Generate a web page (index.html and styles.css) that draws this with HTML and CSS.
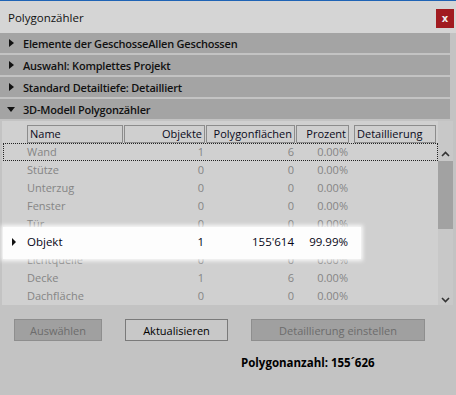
FILE: index.html
```
<!DOCTYPE html>
<html lang="de">
<head>
    <meta charset="UTF-8">
    <title>Polygonzähler</title>
    <link rel="stylesheet" href="styles.css">
</head>
<body>
    <div class="window">
        <div class="titlebar">
            <span class="title">Polygonzähler</span>
            <button class="close">x</button>
        </div>
        <div class="section"><span class="tri right"></span>Elemente der GeschosseAllen Geschossen</div>
        <div class="section"><span class="tri right"></span>Auswahl: Komplettes Projekt</div>
        <div class="section"><span class="tri right"></span>Standard Detailtiefe: Detailliert</div>
        <div class="section"><span class="tri down"></span>3D-Modell Polygonzähler</div>

        <div class="panel">
            <div class="list">
                <div class="grid head">
                    <div class="hcell">Name</div>
                    <div class="hcell num">Objekte</div>
                    <div class="hcell num">Polygonflächen</div>
                    <div class="hcell num">Prozent</div>
                    <div class="hcell last">Detaillierung</div>
                </div>
                <div class="grid row focus"><div>Wand</div><div class="num">1</div><div class="num">6</div><div class="num pct">0.00%</div><div></div></div>
                <div class="grid row"><div>Stütze</div><div class="num">0</div><div class="num">0</div><div class="num pct">0.00%</div><div></div></div>
                <div class="grid row"><div>Unterzug</div><div class="num">0</div><div class="num">0</div><div class="num pct">0.00%</div><div></div></div>
                <div class="grid row"><div>Fenster</div><div class="num">0</div><div class="num">0</div><div class="num pct">0.00%</div><div></div></div>
                <div class="grid row"><div>Tür</div><div class="num">0</div><div class="num">0</div><div class="num pct">0.00%</div><div></div></div>
                <div class="grid row highlight"><span class="tri right small"></span><div>Objekt</div><div class="num">1</div><div class="num">155'614</div><div class="num pct">99.99%</div><div></div></div>
                <div class="grid row"><div>Lichtquelle</div><div class="num">0</div><div class="num">0</div><div class="num pct">0.00%</div><div></div></div>
                <div class="grid row"><div>Decke</div><div class="num">1</div><div class="num">6</div><div class="num pct">0.00%</div><div></div></div>
                <div class="grid row"><div>Dachfläche</div><div class="num">0</div><div class="num">0</div><div class="num pct">0.00%</div><div></div></div>
            </div>
            <div class="scrollbar">
                <svg class="arrow" width="9" height="6" viewBox="0 0 9 6"><path d="M1 5 L4.5 1.5 L8 5" fill="none" stroke="#333" stroke-width="1.6"/></svg>
                <div class="track"><div class="thumb"></div></div>
                <svg class="arrow" width="9" height="6" viewBox="0 0 9 6"><path d="M1 1 L4.5 4.5 L8 1" fill="none" stroke="#333" stroke-width="1.6"/></svg>
            </div>
        </div>

        <div class="buttons">
            <button class="btn disabled w-select">Auswählen</button>
            <button class="btn w-update">Aktualisieren</button>
            <button class="btn disabled w-detail">Detaillierung einstellen</button>
        </div>
        <div class="total">Polygonanzahl: 155´626</div>
    </div>
</body>
</html>
```

FILE: styles.css
```
body {
    margin: 0;
    font-family: "Open Sans", "Noto Sans", sans-serif;
    font-size: 11px;
    background-color: #c3c3c3;
}
.window {
    width: 456px;
    height: 395px;
    background-color: #c3c3c3;
    display: flex;
    flex-direction: column;
}
.titlebar {
    height: 32px;
    border-top: 1px solid #1f63b5;
    background-color: #d5d5d5;
    display: flex;
    align-items: center;
    justify-content: space-between;
    padding: 0 2px 0 8px;
}
.title {
    font-size: 11.5px;
    color: #111;
}
.close {
    width: 18px;
    height: 19px;
    margin-top: 3px;
    background-color: #a11b20;
    color: #eee;
    border: none;
    font-family: "DejaVu Sans", sans-serif;
    font-size: 10px;
    font-weight: bold;
    padding: 0;
}
.section {
    height: 20px;
    margin: 0 6px 2px 0;
    background-color: #a4a4a4;
    display: flex;
    align-items: center;
    padding-left: 8px;
    font-weight: 600;
    letter-spacing: -0.2px;
    color: #111;
}
.section:last-of-type {
    margin-bottom: 0;
}
.tri {
    display: inline-block;
    width: 0;
    height: 0;
    margin-right: 9px;
}
.tri.right {
    border-top: 4px solid transparent;
    border-bottom: 4px solid transparent;
    border-left: 5px solid #111;
    margin-left: 1px;
}
.tri.down {
    border-left: 4px solid transparent;
    border-right: 4px solid transparent;
    border-top: 5px solid #111;
    margin-right: 8px;
    margin-left: -1px;
}
.panel {
    display: flex;
    height: 184px;
    margin: 0 3px 0 2px;
    background-color: #d0d0d0;
}
.list {
    flex: 1;
    padding-top: 4px;
}
.grid {
    display: grid;
    grid-template-columns: 97px 82px 90px 58px 82px;
    padding-left: 25px;
}
.head {
    height: 18px;
}
.hcell {
    border: 1px solid #8c8c8c;
    background-color: #cfcfcf;
    color: #0a0a20;
    line-height: 15px;
    padding: 0 2px;
    margin-right: 1px;
}
.hcell.num {
    text-align: right;
}
.head .hcell:nth-child(4) {
    margin-right: 5px;
}
.hcell.last {
    margin-right: 0;
}
.row {
    height: 18px;
    line-height: 18px;
    color: #858585;
}
.row.focus {
    outline: 1px dotted #222;
    outline-offset: -1px;
    margin-left: 1px;
    padding-left: 24px;
}
.num {
    text-align: right;
    padding-right: 2px;
}
.num.pct {
    padding-right: 6px;
}
/* zoomed-in row drawn over its neighbours */
.highlight {
    position: relative;
    z-index: 1;
    color: #050515;
    font-size: 11.5px;
}
.highlight::before {
    content: '';
    position: absolute;
    left: 1px;
    top: -6px;
    width: 358px;
    height: 32px;
    background-color: #fdfdfd;
    box-shadow: 0 0 4px 2px rgba(255, 255, 255, 0.85);
    z-index: -1;
}
.tri.small {
    position: absolute;
    left: 9px;
    top: 5px;
    border-top-width: 4px;
    border-bottom-width: 4px;
    border-left-width: 4px;
}
.scrollbar {
    width: 15px;
    display: flex;
    flex-direction: column;
    align-items: center;
    background-color: #c8c8c8;
    padding-top: 28px;
}
.arrow {
    margin: 2px 0;
}
.track {
    flex: 1;
    width: 100%;
    padding-bottom: 4px;
}
.thumb {
    height: 68px;
    margin-top: 2px;
    background-color: #a2a2a2;
}
.buttons {
    display: flex;
    padding: 14px 0 0 14px;
    height: 22px;
}
.btn {
    height: 22px;
    font-family: inherit;
    font-size: 11px;
    border: 1px solid #7a7a7a;
    background-color: #c8c8c8;
    color: #000;
    padding: 0;
}
.btn.disabled {
    background-color: #a0a0a0;
    border-color: #8e8e8e;
    color: #6c6c6c;
}
.w-select {
    width: 88px;
    margin-right: 23px;
}
.w-update {
    width: 103px;
    margin-right: 23px;
}
.w-detail {
    width: 174px;
}
.total {
    margin: 14px 0 0 241px;
    font-size: 11.5px;
    font-weight: bold;
    color: #000;
}
```
